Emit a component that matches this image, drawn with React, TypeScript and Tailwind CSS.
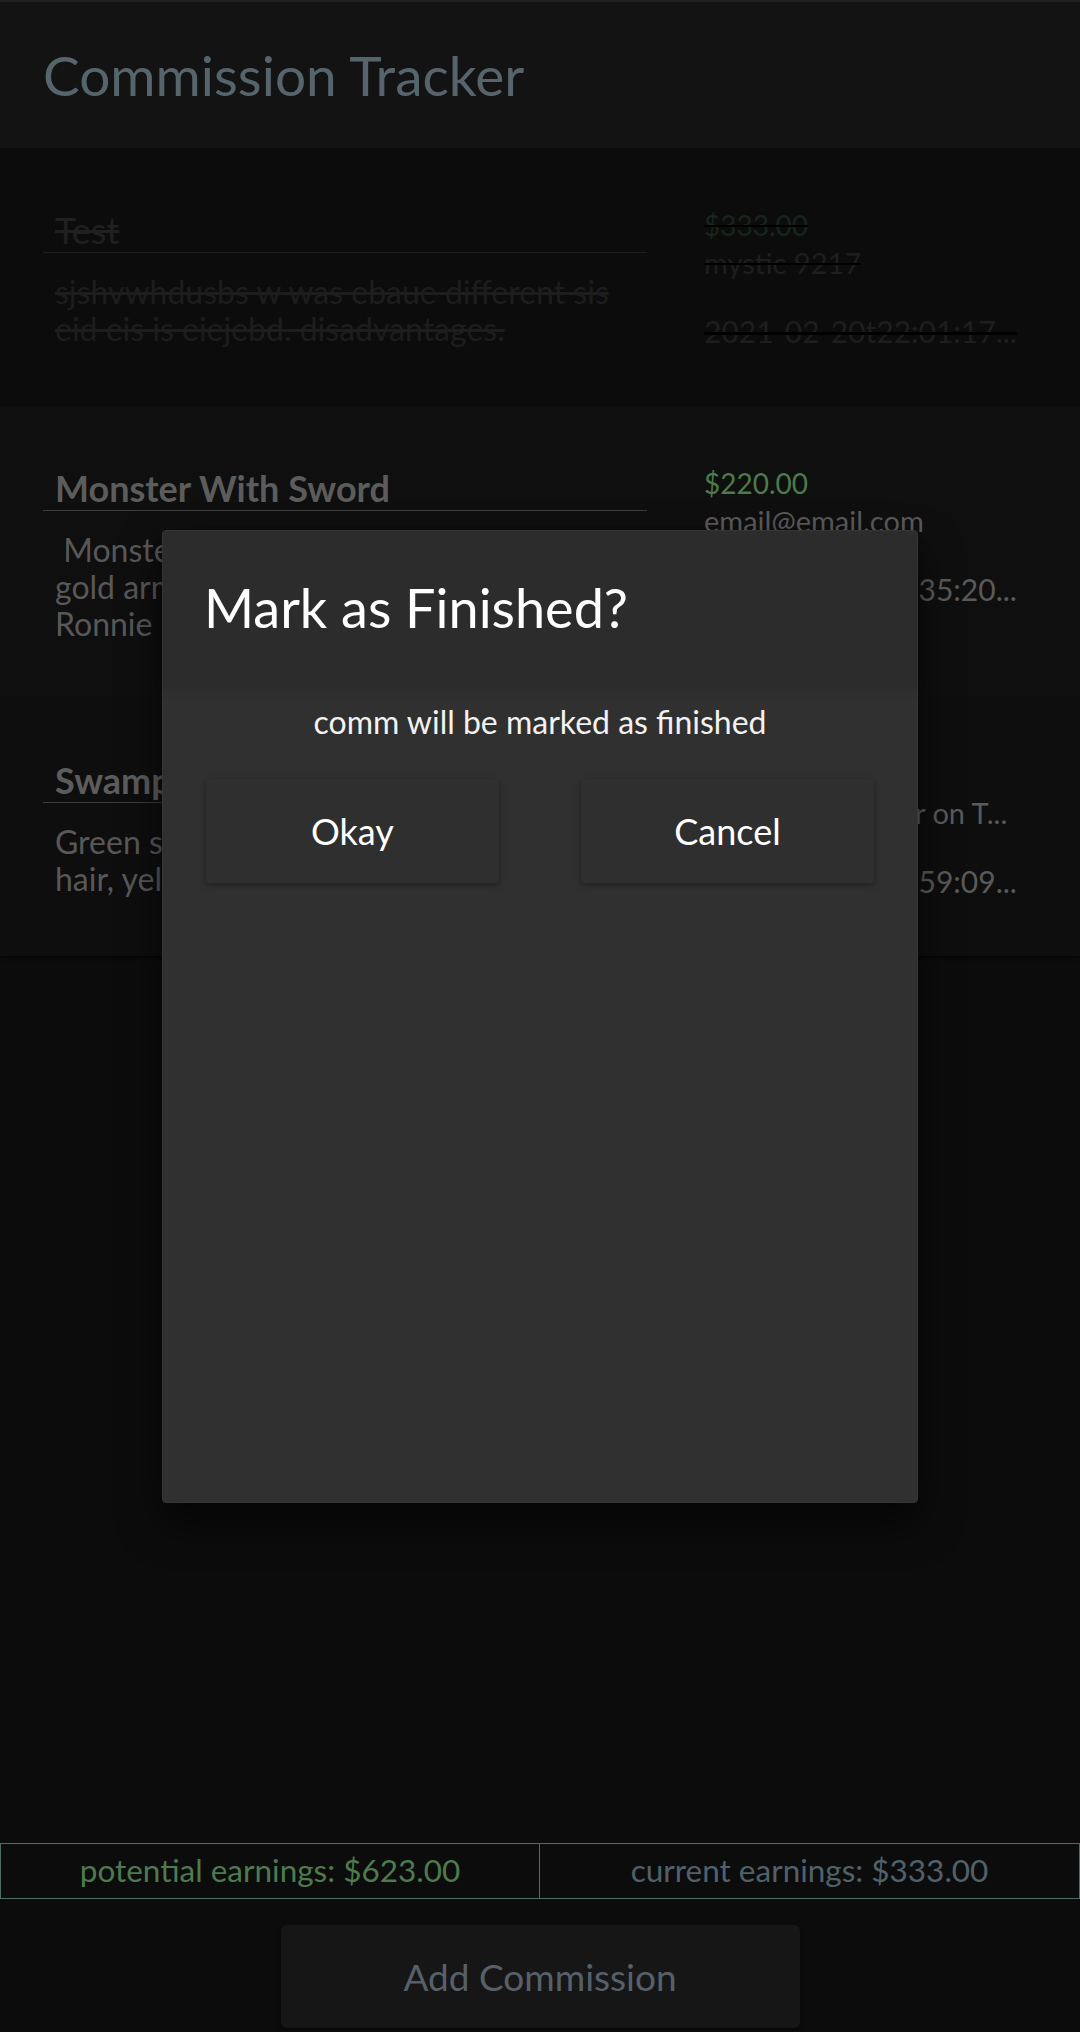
import React from "react";

type RowProps = {
  title: string;
  lines: string[];
  price: string;
  contact: string;
  date: string;
  done?: boolean;
  bg: string;
};

function Row({ title, lines, price, contact, date, done, bg }: RowProps) {
  const strike = done ? "line-through" : "";
  return (
    <div className={`flex px-[43px] pb-[56px] ${bg}`}>
      <div className="w-[604px] shrink-0 pt-[60px]">
        <div
          className={`border-b px-[12px] text-[36px] leading-[44px] ${
            done
              ? "border-[#1e1e1e] text-[#202020] font-normal"
              : "border-[#3c3c3c] text-[#5c5c5c] font-bold"
          } ${strike}`}
        >
          {title}
        </div>
        <div
          className={`mt-[20px] px-[12px] text-[32px] leading-[37px] whitespace-pre ${
            done ? "text-[#1d1d1d]" : "text-[#585858]"
          } ${strike}`}
        >
          {lines.map((l, i) => (
            <div key={i}>{l}</div>
          ))}
        </div>
      </div>
      <div className={`ml-[57px] pt-[58px] leading-[38px] whitespace-nowrap ${strike}`}>
        <div className={`text-[28px] ${done ? "text-[#17261d]" : "text-[#4c7a4c]"}`}>{price}</div>
        <div className={`text-[29px] ${done ? "text-[#1e1e1e]" : "text-[#5a5a5a]"}`}>{contact}</div>
        <div className={`mt-[30px] text-[30px] ${done ? "text-[#1e1e1e]" : "text-[#5a5a5a]"}`}>
          {date}
        </div>
      </div>
    </div>
  );
}

export default function App() {
  return (
    <div className="relative w-full h-[2032px] bg-[#0c0c0c] font-['Lato','Noto_Sans',sans-serif] flex flex-col overflow-hidden">
      <header className="h-[148px] shrink-0 bg-[#131313] border-t-2 border-[#202020] flex items-center px-[43px]">
        <h1 className="text-[55px] leading-none text-[#56646b]">Commission Tracker</h1>
      </header>

      <main className="flex-1 flex flex-col">
        <Row
          done
          bg="bg-[#0c0c0c]"
          title="Test"
          lines={["sjshvwhdusbs w was ebaue different sis", "eid eis is eiejebd. disadvantages."]}
          price="$333.00"
          contact="mystic 9217"
          date="2021-02-20t22:01:17..."
        />
        <Row
          bg="bg-[#0f0f0f] shadow-[0_2px_3px_rgba(0,0,0,0.5)]"
          title="Monster With Sword"
          lines={[" Monster holding a long sword,", "gold armor and a red cape for", "Ronnie"]}
          price="$220.00"
          contact="email@email.com"
          date="2021-02-19t16:35:20..."
        />
        <Row
          bg="bg-[#0e0e0e] shadow-[0_2px_3px_rgba(0,0,0,0.5)]"
          title="Swamp Creature"
          lines={["Green skin, long black", "hair, yellow eyes"]}
          price="$70.00"
          contact="swampfriends07r on T..."
          date="2021-02-18t20:59:09..."
        />
      </main>

      <div className="flex h-[56px] shrink-0 border border-[#4e6b64]">
        <div className="w-1/2 flex items-center justify-center border-r border-[#4e6b64] text-[31.5px] text-[#4d7a4f]">
          potential earnings: $623.00
        </div>
        <div className="w-1/2 flex items-center justify-center text-[31.5px] text-[#50616b]">
          current earnings: $333.00
        </div>
      </div>

      <div className="flex justify-center pt-[26px] pb-[4px] shrink-0">
        <button className="w-[519px] h-[103px] bg-[#161616] rounded-[6px] shadow-[0_2px_4px_rgba(0,0,0,0.5)] text-[37px] text-[#56606a]">
          Add Commission
        </button>
      </div>

      <div className="absolute left-[162px] top-[530px] w-[756px] h-[973px] bg-[#303030] rounded-[4px] border border-[#363636] shadow-[0_20px_40px_rgba(0,0,0,0.6)] flex flex-col">
        <div className="h-[153px] shrink-0 bg-[#2c2c2c] flex items-center px-[41px] shadow-[0_6px_10px_rgba(0,0,0,0.12)]">
          <h2 className="text-[54px] leading-none text-white">Mark as Finished?</h2>
        </div>
        <p className="mt-[18px] text-center text-[32px] leading-[40px] text-[#f2f2f2]">
          comm will be marked as finished
        </p>
        <div className="mt-[37px] flex justify-between px-[43px]">
          <button className="w-[293px] h-[104px] bg-[#2f2f2f] rounded-[4px] shadow-[0_2px_6px_rgba(0,0,0,0.35)] text-[36px] text-white">
            Okay
          </button>
          <button className="w-[293px] h-[104px] bg-[#2f2f2f] rounded-[4px] shadow-[0_2px_6px_rgba(0,0,0,0.35)] text-[36px] text-white">
            Cancel
          </button>
        </div>
      </div>
    </div>
  );
}
